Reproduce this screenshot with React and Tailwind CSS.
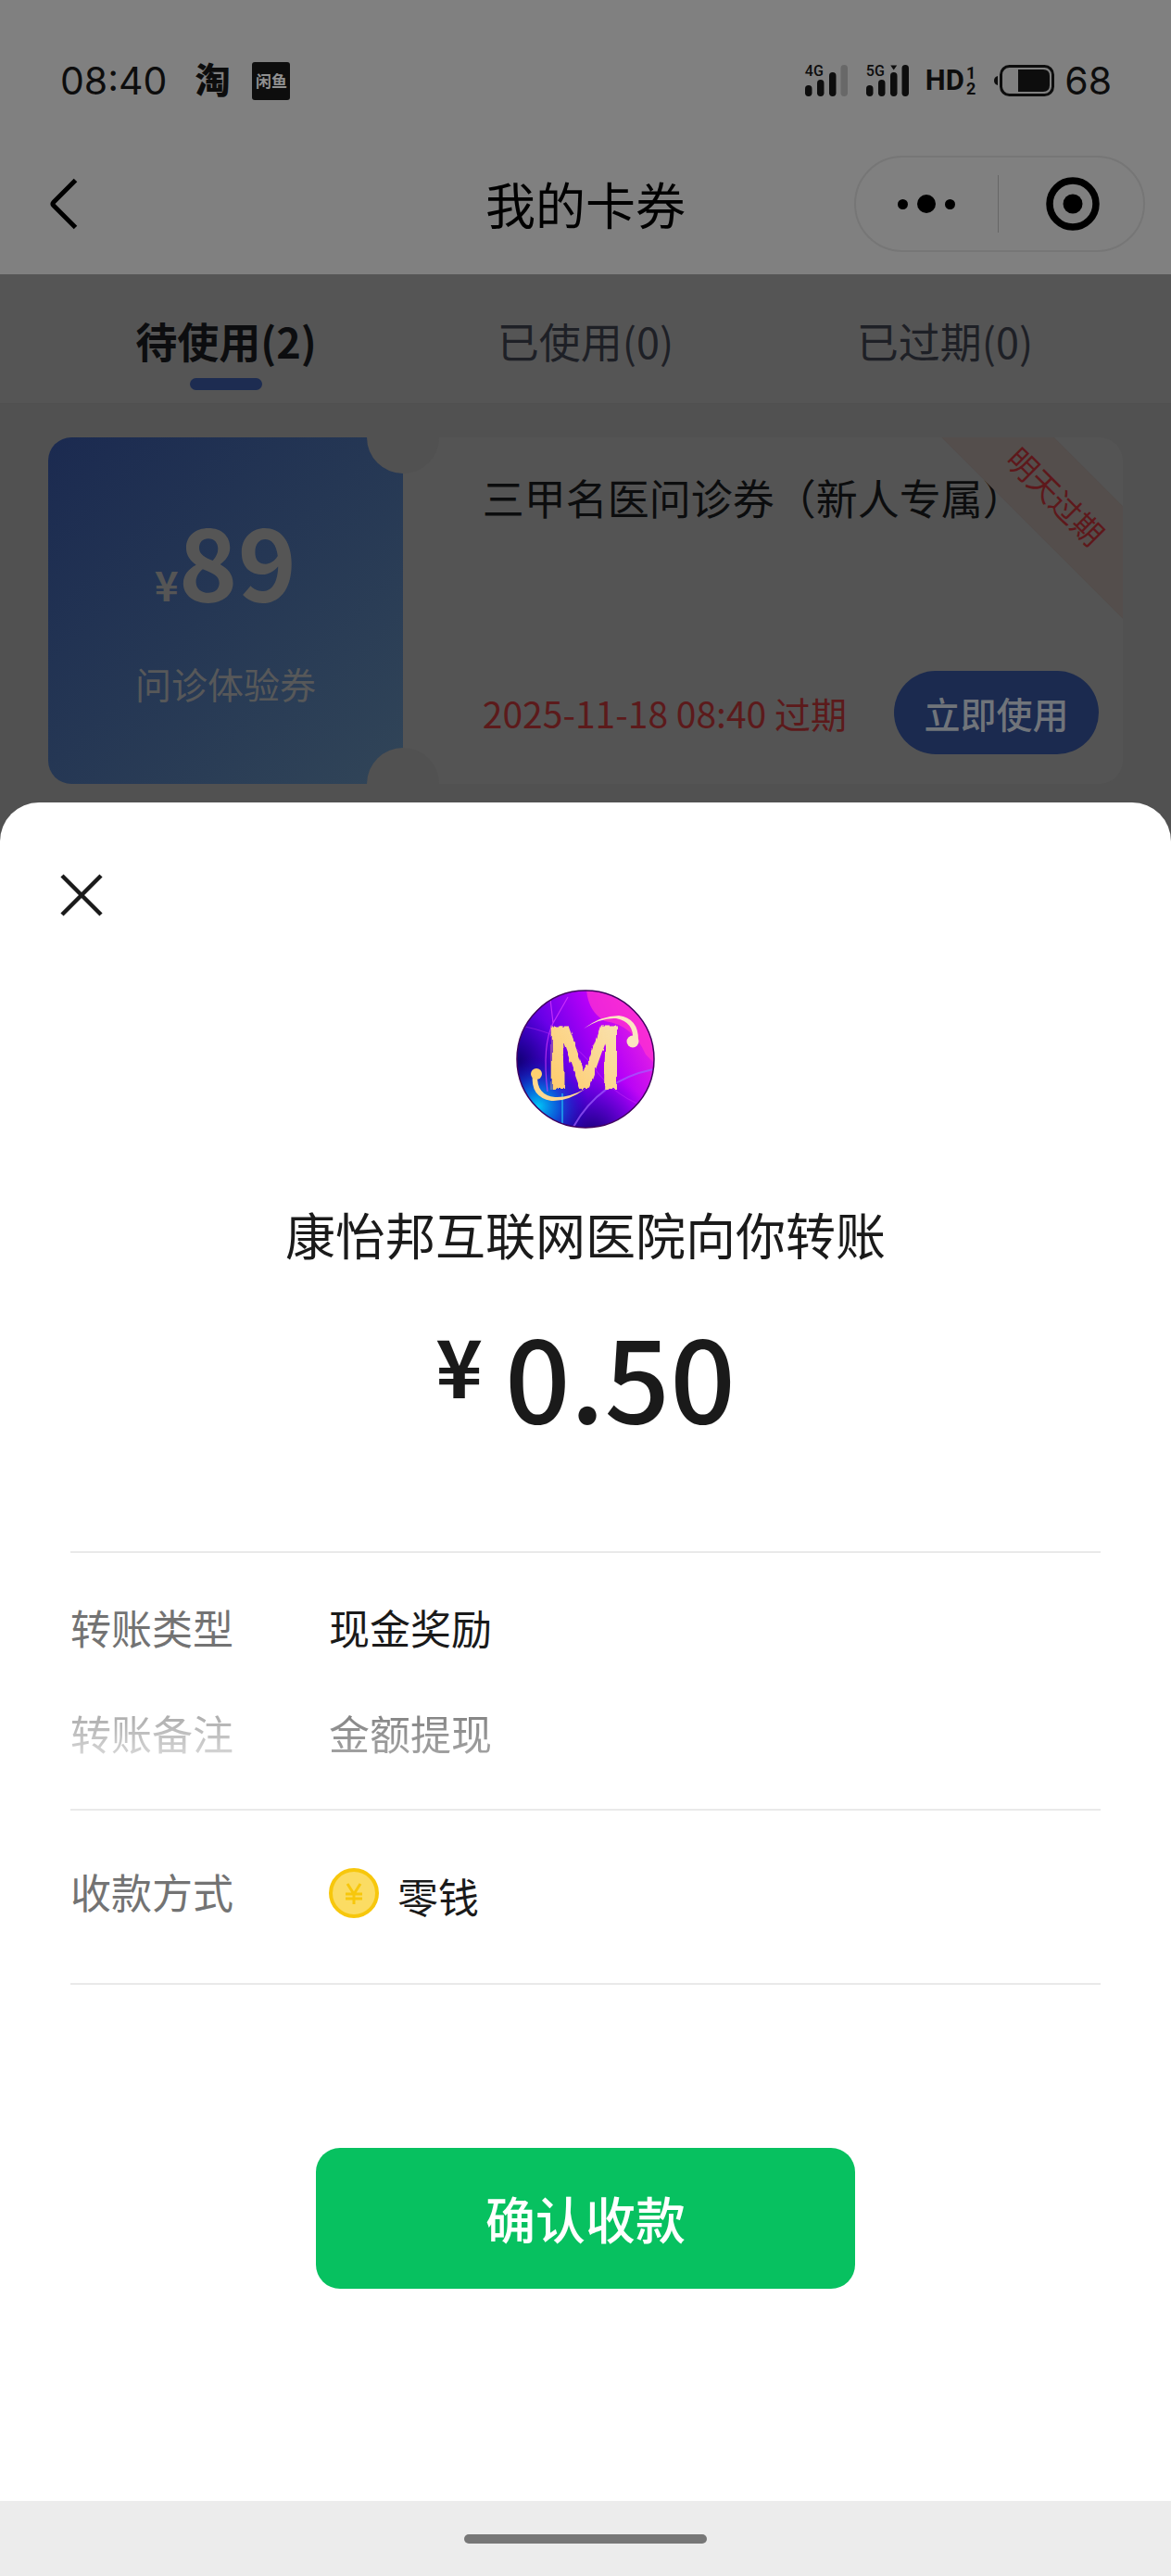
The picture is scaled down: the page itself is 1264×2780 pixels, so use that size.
import { useState } from "react";

const TABS = [
  { id: "pending", label: "待使用", count: 2 },
  { id: "used", label: "已使用", count: 0 },
  { id: "expired", label: "已过期", count: 0 },
];

function Signal({ label, weak, active }) {
  return (
    <div className="relative h-[34px] w-[46px]">
      <span className="absolute left-0 top-0 font-['Roboto'] text-[16px] leading-[13px] font-medium">{label}</span>
      <svg viewBox="0 0 46 34" className="h-[34px] w-[46px]" fill="currentColor" aria-hidden="true">
        <rect x="0" y="22" width="7.5" height="12" rx="3.7" />
        <rect x="13" y="16" width="7.5" height="18" rx="3.7" />
        <rect x="26" y="8" width="7.5" height="26" rx="3.7" />
        <rect x="38.5" y="0" width="7.5" height="34" rx="3.7" fill={weak ? "#686868" : "currentColor"} />
        {active && <path d="M26.2 0.5h7l-3.5 5z" />}
      </svg>
    </div>
  );
}

function StatusBar() {
  return (
    <div className="flex h-[144px] items-center justify-between pt-[30px] pr-[64px] pl-[65px] text-[#0d0d0d]">
      <div className="flex items-center">
        <span className="font-['Inter'] text-[41px] leading-[42px]">08:40</span>
        <span className="ml-[30px] pb-[6px] text-[38px] leading-[42px] font-black">淘</span>
        <span className="ml-[24px] flex h-[41px] w-[41px] items-center justify-center rounded-[3px] bg-[#0d0d0d] text-[17px] leading-[20px] font-bold text-[#909090]">
          闲鱼
        </span>
      </div>
      <div className="flex items-center">
        <Signal label="4G" weak />
        <div className="ml-[20px]">
          <Signal label="5G" active />
        </div>
        <span className="ml-[18px] font-['Roboto'] text-[31px] leading-[34px] font-bold">HD</span>
        <span className="ml-[2px] flex flex-col font-['Roboto'] text-[18px] leading-[17px] font-bold">
          <span>1</span>
          <span>2</span>
        </span>
        <svg viewBox="0 0 66 34" className="ml-[20px] h-[34px] w-[66px]" aria-hidden="true">
          <path d="M4 12v10q-4-1-4-5t4-5z" fill="currentColor" />
          <rect x="7.5" y="1.5" width="56" height="31" rx="9" fill="none" stroke="currentColor" strokeWidth="3" />
          <path d="M26 5h27q7 0 7 7v10q0 7-7 7H26z" fill="currentColor" />
        </svg>
        <span className="ml-[10px] font-['Inter'] text-[41px] leading-[42px]">68</span>
      </div>
    </div>
  );
}

function NavBar() {
  return (
    <header className="grid h-[152px] grid-cols-[1fr_auto_1fr] items-center px-[28px] text-black">
      <button type="button" aria-label="返回" className="ml-[24px] w-[32px]">
        <svg viewBox="0 0 32 56" className="h-[56px] w-[32px]" fill="none" stroke="currentColor" strokeWidth="5" aria-hidden="true">
          <path d="M29.5 2.5L6 26q-2 2 0 4l23.5 23.5" />
        </svg>
      </button>
      <h1 className="text-[54px] leading-[64px]">我的卡券</h1>
      <div className="flex h-[104px] w-[314px] items-center justify-self-end rounded-full border-2 border-[#767676]">
        <button type="button" aria-label="更多" className="flex h-full flex-1 items-center justify-center gap-[10px]">
          <span className="h-[11px] w-[11px] rounded-full bg-black" />
          <span className="h-[20px] w-[20px] rounded-full bg-black" />
          <span className="h-[11px] w-[11px] rounded-full bg-black" />
        </button>
        <span className="h-[62px] w-px bg-[#666666]" />
        <button type="button" aria-label="关闭小程序" className="flex h-full flex-1 items-center justify-center pl-[4px]">
          <svg viewBox="0 0 58 58" className="h-[58px] w-[58px]" aria-hidden="true">
            <circle cx="29" cy="29" r="25" fill="none" stroke="currentColor" strokeWidth="7.5" />
            <circle cx="29" cy="29" r="10.5" fill="currentColor" />
          </svg>
        </button>
      </div>
    </header>
  );
}

function CouponCard() {
  return (
    <article className="relative mx-[52px] mt-[36px] flex h-[374px] overflow-hidden rounded-[25px] bg-[#545454]">
      <div className="flex w-[33%] flex-col items-center bg-linear-to-br from-[#1b2a50] to-[#314558] pt-[68px] text-[#555555]">
        <p className="flex items-baseline font-bold">
          <span className="text-[44px] leading-[124px]">¥</span>
          <span className="text-[108px] leading-[124px]">89</span>
        </p>
        <p className="mt-[20px] text-[39px] leading-[50px] text-[#575859]">问诊体验券</p>
      </div>
      {/* ticket notches */}
      <span className="absolute top-[-39px] left-[33%] h-[78px] w-[78px] -translate-x-1/2 rounded-full bg-[#515151]" />
      <span className="absolute bottom-[-39px] left-[33%] h-[78px] w-[78px] -translate-x-1/2 rounded-full bg-[#515151]" />

      <div className="flex flex-1 flex-col justify-between pt-[36px] pr-[26px] pb-[32px] pl-[86px]">
        <h2 className="text-[45px] leading-[58px] whitespace-nowrap text-[#0c0d0e]">三甲名医问诊券（新人专属）</h2>
        <div className="flex items-center justify-between">
          <time className="text-[39px] leading-[50px] text-[#5c1a1b]">2025-11-18 08:40 过期</time>
          <button type="button" className="h-[90px] w-[221px] rounded-full bg-[#1b2a4f] text-[39px] leading-[50px] font-medium text-[#70747a]">
            立即使用
          </button>
        </div>
      </div>
      <div className="absolute top-[20px] right-[-128px] flex h-[86px] w-[400px] rotate-45 items-center justify-center bg-[#544e4c]">
        <span className="text-[33px] leading-[44px] text-[#5e181b]">明天过期</span>
      </div>
    </article>
  );
}

function Avatar() {
  return (
    <svg viewBox="0 0 150 150" className="h-[150px] w-[150px]" role="img" aria-label="康怡邦互联网医院">
      <defs>
        <linearGradient id="base" x1="0" y1="0.7" x2="1" y2="0.25">
          <stop offset="0" stopColor="#1400a0" />
          <stop offset="0.35" stopColor="#6a00e8" />
          <stop offset="0.65" stopColor="#b400f8" />
          <stop offset="1" stopColor="#f028e0" />
        </linearGradient>
        <radialGradient id="cyan" cx="0.16" cy="0.84" r="0.36">
          <stop offset="0" stopColor="#00c8f8" />
          <stop offset="0.4" stopColor="#0070e0" stopOpacity="0.8" />
          <stop offset="1" stopColor="#1000b0" stopOpacity="0" />
        </radialGradient>
        <radialGradient id="navy" cx="0.55" cy="1.05" r="0.45">
          <stop offset="0" stopColor="#180070" />
          <stop offset="1" stopColor="#3000d0" stopOpacity="0" />
        </radialGradient>
        <radialGradient id="left" cx="0" cy="0.52" r="0.36">
          <stop offset="0" stopColor="#100070" />
          <stop offset="1" stopColor="#3000c0" stopOpacity="0" />
        </radialGradient>
        <linearGradient id="gold" x1="0" y1="1" x2="1" y2="0">
          <stop offset="0" stopColor="#ffc860" />
          <stop offset="1" stopColor="#f8e4b8" />
        </linearGradient>
        <filter id="brush" x="-10%" y="-10%" width="120%" height="120%">
          <feTurbulence type="fractalNoise" baseFrequency="0.3 0.04" numOctaves="2" seed="4" result="n" />
          <feDisplacementMap in="SourceGraphic" in2="n" scale="5" xChannelSelector="A" yChannelSelector="R" />
        </filter>
        <clipPath id="disc">
          <circle cx="75" cy="75" r="74" />
        </clipPath>
      </defs>
      <g clipPath="url(#disc)">
        <rect width="150" height="150" fill="url(#base)" />
        <path d="M76 0Q78 24 96 34Q126 38 140 70L150 80V0z" fill="#ff30d0" opacity="0.75" />
        <rect width="150" height="150" fill="url(#left)" />
        <rect width="150" height="150" fill="url(#navy)" />
        <rect width="150" height="150" fill="url(#cyan)" />
        <g fill="none" stroke="#e040ff" strokeWidth="1.2" opacity="0.7">
          <path d="M37 10L40 36L56 8M40 36Q28 60 34 110" />
          <path d="M62 148Q90 98 148 86" stroke="#a060ff" strokeWidth="2" />
          <path d="M50 112V146" stroke="#20b0f0" strokeWidth="2" />
          <path d="M10 40Q60 50 84 84T146 128" opacity="0.5" />
        </g>
      </g>
      <circle cx="75" cy="75" r="74" fill="none" stroke="#400060" strokeWidth="1.5" />
      <text x="74" y="107" textAnchor="middle" fill="url(#gold)" filter="url(#brush)" className="font-['Roboto'] text-[94px] font-bold">
        M
      </text>
      <path d="M73 42Q92 28 111 28Q132 31 132 54L126 55Q128 35 108 31Q92 30 73 42z" fill="#fbe6c0" />
      <circle cx="126" cy="56" r="6.5" fill="#fbe6c0" />
      <path d="M75 107Q56 121 38 120Q15 116 18 91L23 92Q22 114 42 116Q56 117 75 107z" fill="#ffd890" />
      <circle cx="22" cy="91" r="6" fill="#ffcf70" />
    </svg>
  );
}

function TransferSheet() {
  return (
    <section role="dialog" aria-label="确认收款" className="mt-[20px] flex flex-1 flex-col rounded-t-[42px] bg-white text-[#1a1a1a]">
      <button type="button" aria-label="关闭" className="mt-[77px] ml-[65px] w-[46px]">
        <svg viewBox="0 0 46 46" className="h-[46px] w-[46px]" stroke="currentColor" strokeWidth="4.5" aria-hidden="true">
          <path d="M2 2L44 44M44 2L2 44" />
        </svg>
      </button>

      <div className="mt-[79px] flex flex-col items-center">
        <Avatar />
        <h2 className="mt-[82px] text-[54px] leading-[64px]">康怡邦互联网医院向你转账</h2>
        <p className="mt-[42px] flex items-start">
          <span className="text-[86px] leading-[132px] font-bold">¥</span>
          <span className="ml-[24px] text-[124px] leading-[152px] font-medium">0.50</span>
        </p>
      </div>

      <dl className="mx-[76px] mt-[116px] text-[44px] leading-[54px]">
        <div className="border-y-2 border-[#e9e9e9] pt-[53px] pb-[55px]">
          <div className="flex">
            <dt className="w-[279px] text-[#737373]">转账类型</dt>
            <dd>现金奖励</dd>
          </div>
          {/* fades out towards the edge of the list */}
          <div className="mt-[60px] flex">
            <dt className="w-[279px] bg-linear-to-b from-[#a6a6a6] to-[#d8d8d8] bg-clip-text text-transparent">转账备注</dt>
            <dd className="bg-linear-to-b from-[#808080] to-[#a4a4a4] bg-clip-text text-transparent">金额提现</dd>
          </div>
        </div>
        <div className="flex items-start border-b-2 border-[#e9e9e9] pt-[62px] pb-[70px]">
          <dt className="w-[279px] leading-[50px] text-[#737373]">收款方式</dt>
          <dd className="flex items-center">
            <svg viewBox="0 0 54 54" className="h-[54px] w-[54px]" aria-hidden="true">
              <circle cx="27" cy="27" r="25" fill="#fbdc63" stroke="#f7c70c" strokeWidth="4" />
              <path d="M20 17l7 11 7-11M27 28v11M18 28h18M18 33h18" fill="none" stroke="#f7c70c" strokeWidth="3" />
            </svg>
            <span className="ml-[20px] pt-[6px] leading-[48px]">零钱</span>
          </dd>
        </div>
      </dl>

      <button type="button" className="mt-[176px] h-[152px] w-[582px] self-center rounded-[26px] bg-[#07c160] text-[54px] leading-[64px] font-medium text-white">
        确认收款
      </button>

      <div className="mt-auto flex h-[81px] items-center justify-center bg-[#ececec]">
        <span className="h-[10px] w-[262px] rounded-full bg-[#777777]" />
      </div>
    </section>
  );
}

export default function App() {
  const [activeTab, setActiveTab] = useState("pending");

  return (
    <div className="flex min-h-screen flex-col bg-[#515151] font-['Noto_Sans_CJK_SC',sans-serif]">
      <div className="bg-[#808080]">
        <StatusBar />
        <NavBar />
      </div>

      <nav className="flex border-b border-[#505050] bg-[#555555] px-[50px]">
        {TABS.map((tab) => (
          <button
            key={tab.id}
            type="button"
            onClick={() => setActiveTab(tab.id)}
            className={
              activeTab === tab.id
                ? "flex flex-1 flex-col items-center pt-[43px] pb-[14px] text-[45px] leading-[58px] font-bold text-[#0c0d0f]"
                : "flex flex-1 flex-col items-center pt-[43px] pb-[14px] text-[45px] leading-[58px] text-[#1e2026]"
            }
          >
            {tab.label}({tab.count})
            {activeTab === tab.id && <span className="mt-[11px] h-[13px] w-[78px] rounded-full bg-[#1d2c51]" />}
          </button>
        ))}
      </nav>

      <CouponCard />
      <TransferSheet />
    </div>
  );
}
